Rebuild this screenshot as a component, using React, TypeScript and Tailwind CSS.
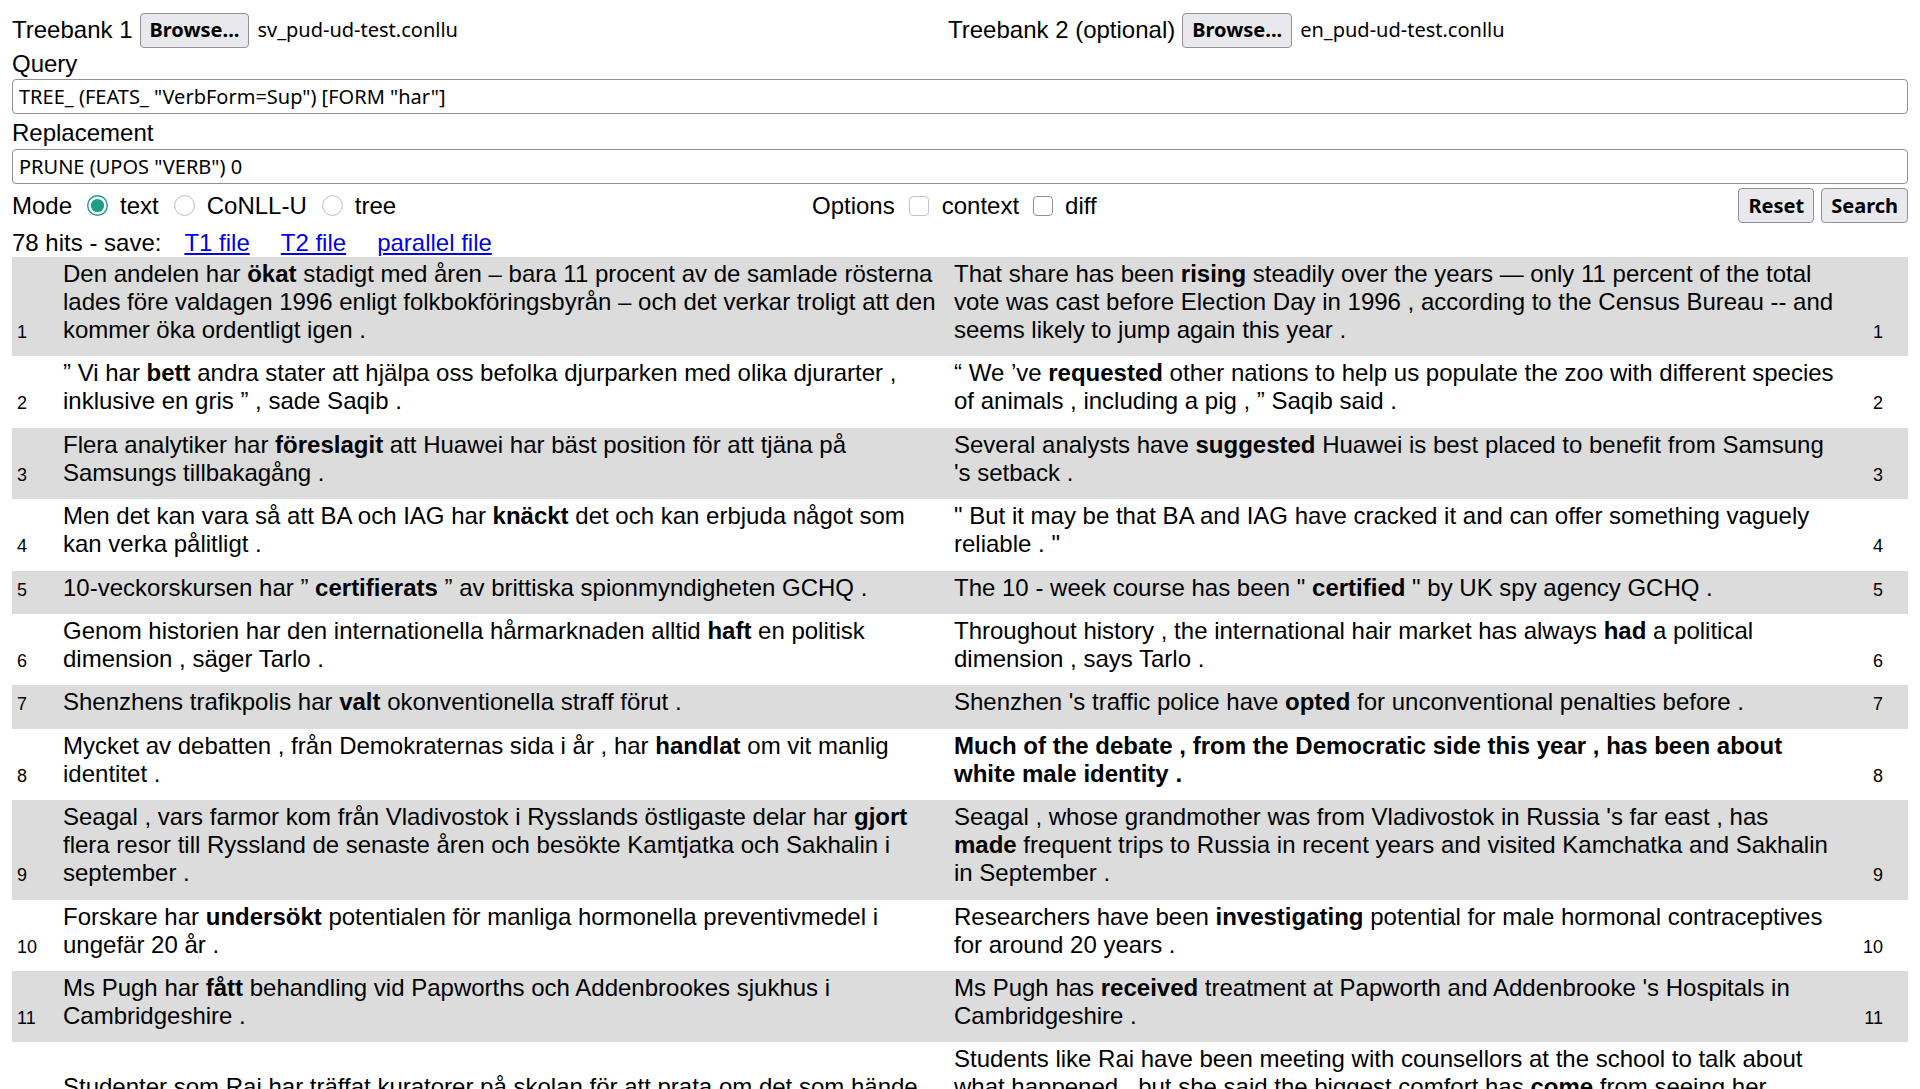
import React from 'react';

type Row = { left: string[]; right: string[] };

// *word* marks the matched (bold) token
const rows: Row[] = [
  {
    left: [
      'Den andelen har *ökat* stadigt med åren – bara 11 procent av de samlade rösterna',
      'lades före valdagen 1996 enligt folkbokföringsbyrån – och det verkar troligt att den',
      'kommer öka ordentligt igen .',
    ],
    right: [
      'That share has been *rising* steadily over the years — only 11 percent of the total',
      'vote was cast before Election Day in 1996 , according to the Census Bureau -- and',
      'seems likely to jump again this year .',
    ],
  },
  {
    left: [
      '” Vi har *bett* andra stater att hjälpa oss befolka djurparken med olika djurarter ,',
      'inklusive en gris ” , sade Saqib .',
    ],
    right: [
      '“ We ’ve *requested* other nations to help us populate the zoo with different species',
      'of animals , including a pig , ” Saqib said .',
    ],
  },
  {
    left: [
      'Flera analytiker har *föreslagit* att Huawei har bäst position för att tjäna på',
      'Samsungs tillbakagång .',
    ],
    right: [
      'Several analysts have *suggested* Huawei is best placed to benefit from Samsung',
      "'s setback .",
    ],
  },
  {
    left: [
      'Men det kan vara så att BA och IAG har *knäckt* det och kan erbjuda något som',
      'kan verka pålitligt .',
    ],
    right: [
      '" But it may be that BA and IAG have cracked it and can offer something vaguely',
      'reliable . "',
    ],
  },
  {
    left: ['10-veckorskursen har ” *certifierats* ” av brittiska spionmyndigheten GCHQ .'],
    right: ['The 10 - week course has been " *certified* " by UK spy agency GCHQ .'],
  },
  {
    left: [
      'Genom historien har den internationella hårmarknaden alltid *haft* en politisk',
      'dimension , säger Tarlo .',
    ],
    right: [
      'Throughout history , the international hair market has always *had* a political',
      'dimension , says Tarlo .',
    ],
  },
  {
    left: ['Shenzhens trafikpolis har *valt* okonventionella straff förut .'],
    right: ["Shenzhen 's traffic police have *opted* for unconventional penalties before ."],
  },
  {
    left: [
      'Mycket av debatten , från Demokraternas sida i år , har *handlat* om vit manlig',
      'identitet .',
    ],
    right: [
      '*Much of the debate , from the Democratic side this year , has been about*',
      '*white male identity .*',
    ],
  },
  {
    left: [
      'Seagal , vars farmor kom från Vladivostok i Rysslands östligaste delar har *gjort*',
      'flera resor till Ryssland de senaste åren och besökte Kamtjatka och Sakhalin i',
      'september .',
    ],
    right: [
      "Seagal , whose grandmother was from Vladivostok in Russia 's far east , has",
      '*made* frequent trips to Russia in recent years and visited Kamchatka and Sakhalin',
      'in September .',
    ],
  },
  {
    left: [
      'Forskare har *undersökt* potentialen för manliga hormonella preventivmedel i',
      'ungefär 20 år .',
    ],
    right: [
      'Researchers have been *investigating* potential for male hormonal contraceptives',
      'for around 20 years .',
    ],
  },
  {
    left: [
      'Ms Pugh har *fått* behandling vid Papworths och Addenbrookes sjukhus i',
      'Cambridgeshire .',
    ],
    right: [
      "Ms Pugh has *received* treatment at Papworth and Addenbrooke 's Hospitals in",
      'Cambridgeshire .',
    ],
  },
  {
    left: [
      'Studenter som Rai har träffat kuratorer på skolan för att prata om det som hände',
      ', men hon sa att den största trösten har *kommit* från att träffa sina vänner .',
    ],
    right: [
      'Students like Rai have been meeting with counsellors at the school to talk about',
      'what happened , but she said the biggest comfort has *come* from seeing her',
      'friends .',
    ],
  },
];

function Sentence({ lines }: { lines: string[] }) {
  return (
    <>
      {lines.map((line, li) => (
        <React.Fragment key={li}>
          {li > 0 && <br />}
          {line.split('*').map((part, i) =>
            i % 2 === 1 ? (
              <b key={i} className="font-bold">
                {part}
              </b>
            ) : (
              <React.Fragment key={i}>{part}</React.Fragment>
            )
          )}
        </React.Fragment>
      ))}
    </>
  );
}

function UiButton({ children }: { children: React.ReactNode }) {
  return (
    <button className="h-[35px] shrink-0 px-[9px] rounded-[4px] border border-[#8f8f9d] bg-[#e9e9ed] font-['Noto_Sans',sans-serif] text-[20px] font-bold text-black leading-none">
      {children}
    </button>
  );
}

function FileInput({ name }: { name: string }) {
  return (
    <div className="flex items-center">
      <div className="ml-[7px]">
        <UiButton>Browse...</UiButton>
      </div>
      <span className="ml-[8px] font-['Noto_Sans',sans-serif] text-[20px] text-black">{name}</span>
    </div>
  );
}

function Radio({ checked }: { checked?: boolean }) {
  return (
    <svg width="21" height="21" viewBox="0 0 21 21" className="shrink-0 ml-[15px] mr-[12px]">
      {checked ? (
        <>
          <circle cx="10.5" cy="10.5" r="9.8" fill="#fff" stroke="#1c9d86" strokeWidth="1.4" />
          <circle cx="10.5" cy="10.5" r="6.6" fill="#1c9d86" />
        </>
      ) : (
        <circle cx="10.5" cy="10.5" r="9.9" fill="#fff" stroke="#b9b9c1" strokeWidth="1" />
      )}
    </svg>
  );
}

function Checkbox({ dark }: { dark?: boolean }) {
  return (
    <span
      className={
        dark
          ? 'shrink-0 w-[20px] h-[20px] ml-[14px] mr-[12px] rounded-[4px] border border-[#8f8f9d] bg-white'
          : 'shrink-0 w-[20px] h-[20px] ml-[14px] mr-[13px] rounded-[4px] border border-[#c4c4cc] bg-white'
      }
    />
  );
}

export default function App() {
  return (
    <div className="min-h-screen bg-white text-black font-['Liberation_Sans',Arial,sans-serif] text-[24px] px-[12px] pt-[12px] pb-[40px]">
      {/* ── Treebank files ── */}
      <div className="flex items-center h-[35px]">
        <div className="flex items-center w-[936px]">
          <span className="leading-[28px]">Treebank 1</span>
          <FileInput name="sv_pud-ud-test.conllu" />
        </div>
        <div className="flex items-center">
          <span className="leading-[28px]">Treebank 2 (optional)</span>
          <FileInput name="en_pud-ud-test.conllu" />
        </div>
      </div>

      {/* ── Query / Replacement ── */}
      <div className="mt-[3px] leading-[28px]">Query</div>
      <div className="mt-[1px] h-[35px] flex items-center px-[6px] rounded-[4px] border border-[#8f8f9d] bg-white font-['Noto_Sans',sans-serif] text-[20px]">
        TREE_ (FEATS_ "VerbForm=Sup") [FORM "har"]
      </div>
      <div className="mt-[5px] leading-[28px]">Replacement</div>
      <div className="mt-[2px] h-[35px] flex items-center px-[6px] rounded-[4px] border border-[#8f8f9d] bg-white font-['Noto_Sans',sans-serif] text-[20px]">
        PRUNE (UPOS "VERB") 0
      </div>

      {/* ── Mode / Options / actions ── */}
      <div className="mt-[5px] h-[33px] flex items-center leading-[28px]">
        <div className="flex items-center w-[800px]">
          <span>Mode</span>
          <Radio checked />
          <span>text</span>
          <Radio />
          <span>CoNLL-U</span>
          <Radio />
          <span>tree</span>
        </div>
        <div className="flex items-center">
          <span>Options</span>
          <Checkbox />
          <span>context</span>
          <Checkbox dark />
          <span>diff</span>
        </div>
        <div className="ml-auto flex items-center gap-[7px]">
          <UiButton>Reset</UiButton>
          <UiButton>Search</UiButton>
        </div>
      </div>

      {/* ── Hits ── */}
      <div className="mt-[7px] leading-[28px] flex">
        <span>78 hits - save:</span>
        <a href="#" className="ml-[23px] text-[#0000ee] underline">T1 file</a>
        <a href="#" className="ml-[31px] text-[#0000ee] underline">T2 file</a>
        <a href="#" className="ml-[31px] text-[#0000ee] underline">parallel file</a>
      </div>

      {/* ── Results ── */}
      <table className="w-full table-fixed border-collapse">
        <colgroup>
          <col className="w-[51px]" />
          <col className="w-[891px]" />
          <col />
          <col className="w-[51px]" />
        </colgroup>
        <tbody>
          {rows.map((row, i) => (
            <tr key={i} className={i % 2 === 0 ? 'bg-[#dcdcdc]' : 'bg-white'}>
              <td className="align-bottom pl-[5px] pt-[3px] pb-[12.4px] text-[18px] leading-[24px]">{i + 1}</td>
              <td className="align-bottom pt-[3px] pb-[12.4px] pr-[8px] leading-[28px]">
                <Sentence lines={row.left} />
              </td>
              <td className="align-bottom pt-[3px] pb-[12.4px] pr-[8px] leading-[28px]">
                <Sentence lines={row.right} />
              </td>
              <td className="align-bottom text-right pr-[25px] pt-[3px] pb-[12.4px] text-[18px] leading-[24px]">
                {i + 1}
              </td>
            </tr>
          ))}
        </tbody>
      </table>
    </div>
  );
}
